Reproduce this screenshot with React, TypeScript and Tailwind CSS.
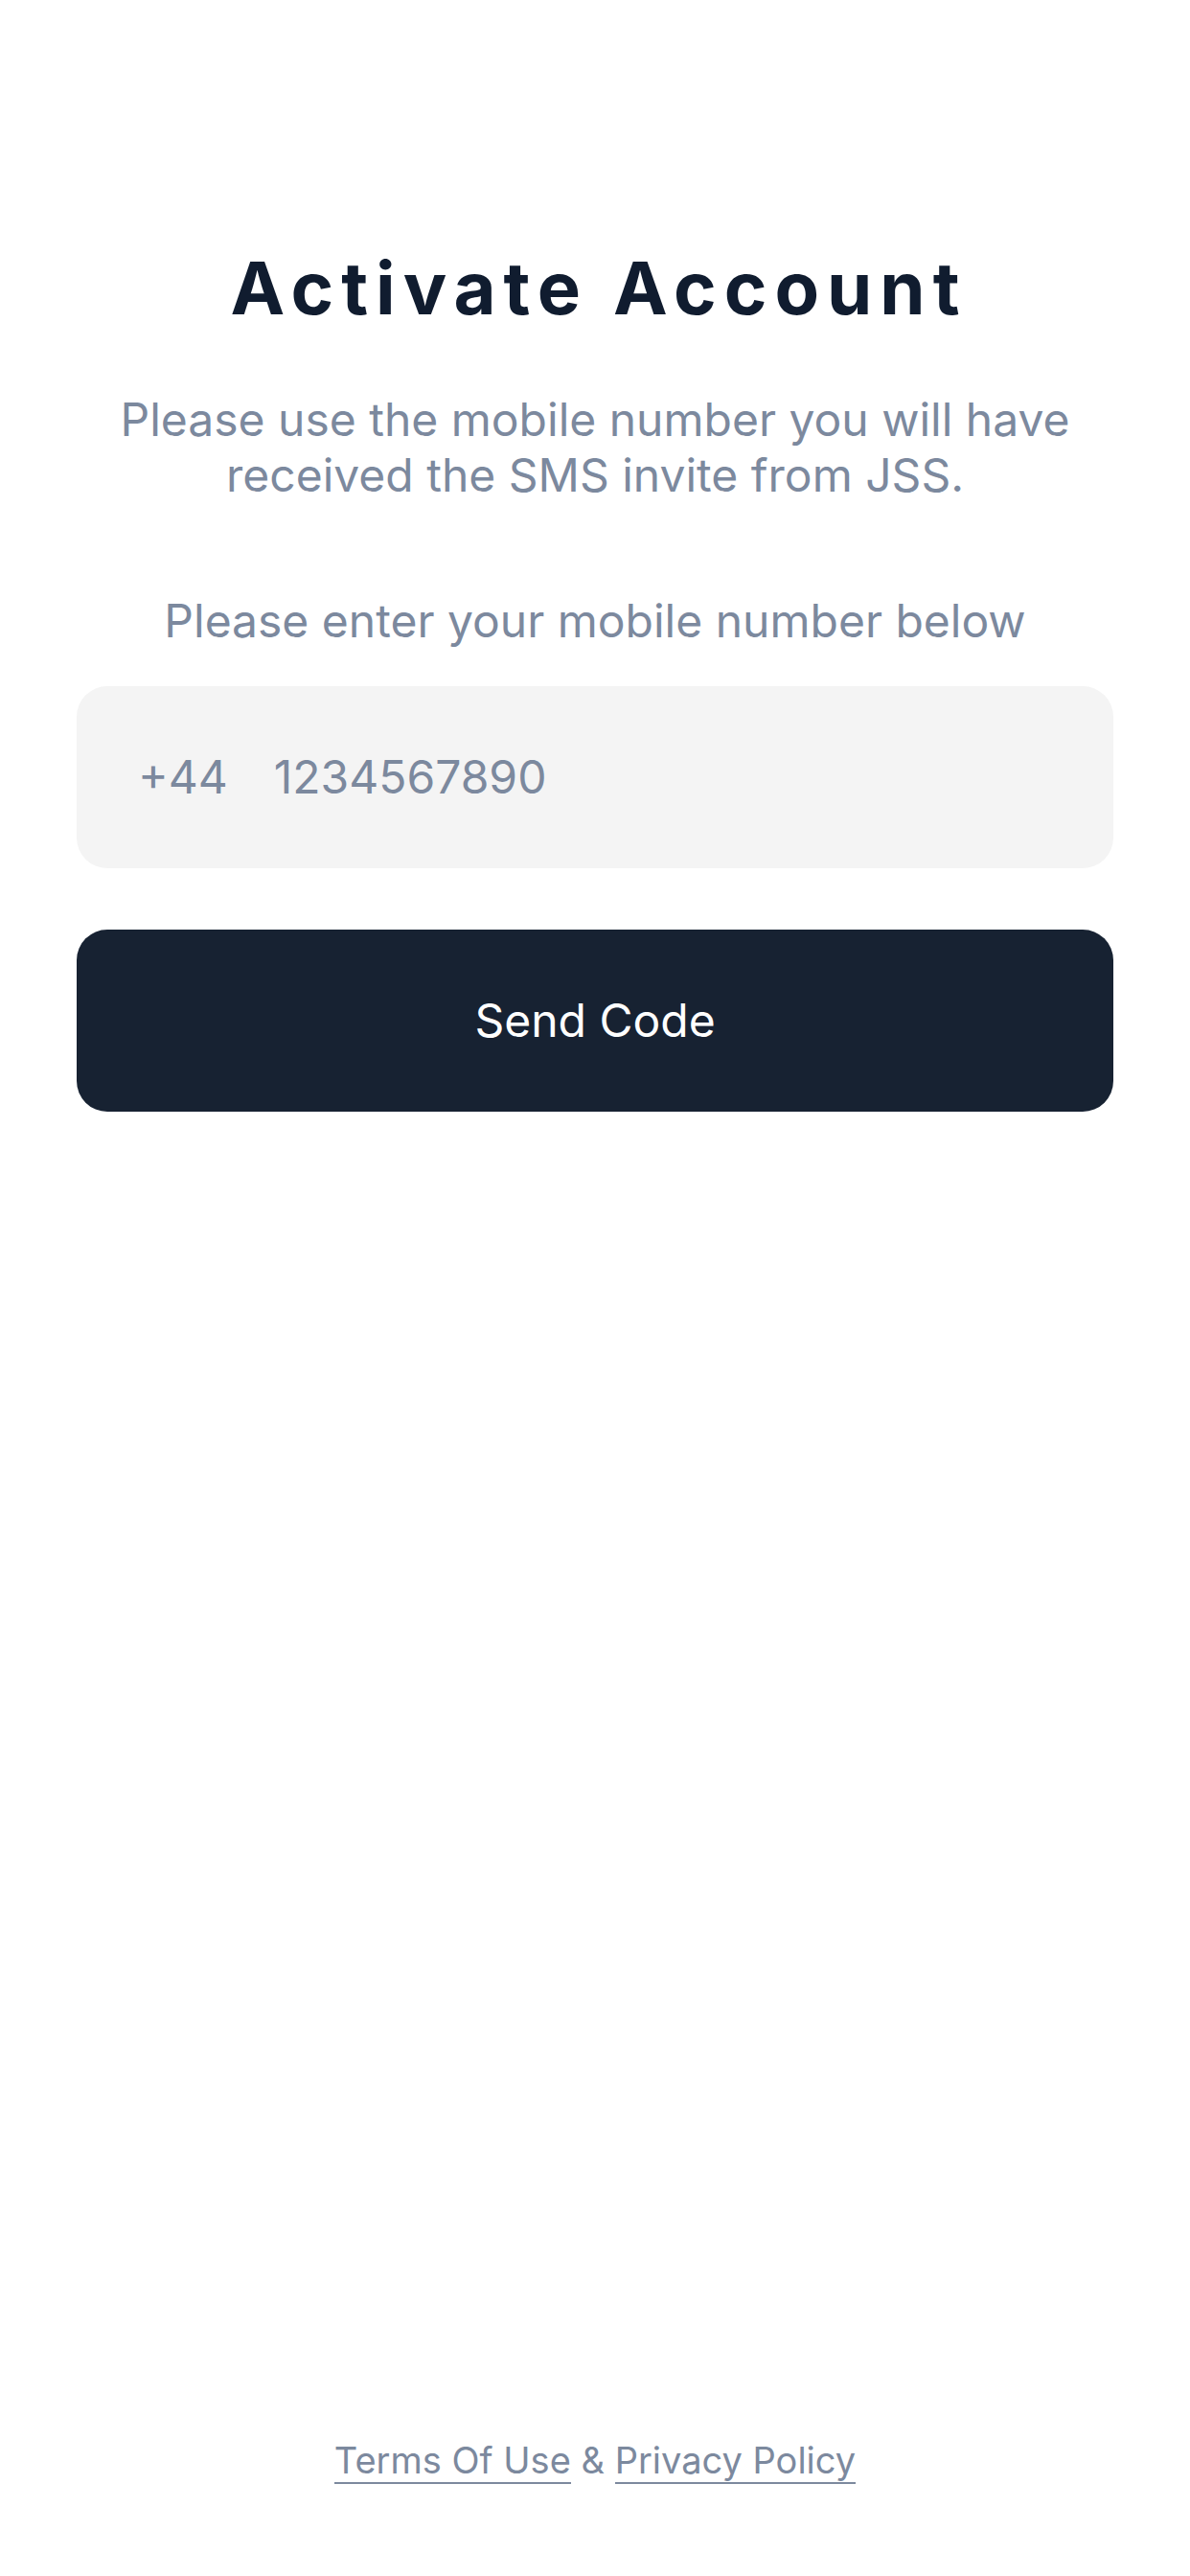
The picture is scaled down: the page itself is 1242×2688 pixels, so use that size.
import React, { useState } from 'react';

const ActivateAccount: React.FC = () => {
  const [mobile, setMobile] = useState('');

  return (
    <div className="flex min-h-screen flex-col bg-white px-20 pt-[252px] pb-24 font-['Inter',sans-serif] text-[#7c899e]">
      <main className="flex flex-col text-center">
        <h1 className="pl-2 text-[76px] leading-[96px] font-bold tracking-[8px] text-[#101c2f]">Activate Account</h1>
        <p className="mt-[61px] px-10 text-[48px] leading-[58px]">
          Please use the mobile number you will have received the SMS invite from JSS.
        </p>
        <form className="flex flex-col" onSubmit={(e) => e.preventDefault()}>
          <label htmlFor="mobile" className="mt-[94px] text-[48px] leading-[58px]">
            Please enter your mobile number below
          </label>
          <div className="mt-[39px] flex h-[190px] items-center gap-12 rounded-[32px] bg-[#f4f4f4] px-16 text-[48px]">
            <span>+44</span>
            <input
              id="mobile"
              type="tel"
              value={mobile}
              onChange={(e) => setMobile(e.target.value)}
              placeholder="1234567890"
              className="min-w-0 flex-1 bg-transparent outline-none placeholder:text-[#7c899e]"
            />
          </div>
          <button type="submit" className="mt-16 h-[190px] rounded-[32px] bg-[#172232] text-[48px] text-white">
            Send Code
          </button>
        </form>
      </main>
      <footer className="mt-auto text-center text-[38px] leading-[46px]">
        <a href="#terms" className="inline-block border-b-2 border-[#7c899e]">Terms Of Use</a>
        {' & '}
        <a href="#privacy" className="inline-block border-b-2 border-[#7c899e]">Privacy Policy</a>
      </footer>
    </div>
  );
};

export default ActivateAccount;
